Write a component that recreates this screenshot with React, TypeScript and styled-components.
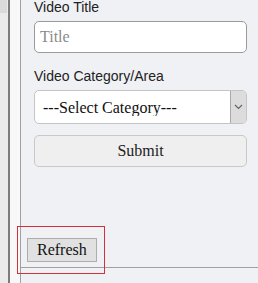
import React from "react";
import styled, { createGlobalStyle } from "styled-components";

const GlobalStyle = createGlobalStyle`
  html, body {
    margin: 0;
    padding: 0;
    background: #f0f1f5;
  }
`;

const categories = ["---Select Category---", "Education", "Music", "Sports"];

const App = () => {
  return (
    <>
      <GlobalStyle />
      <Page>
        <Gutter>
          <Thumb />
        </Gutter>
        <Rule />
        <Strip />
        <Panel>
          <Form>
            <Label>Video Title</Label>
            <TextInput type="text" placeholder="Title" />
            <Label $gap={15}>Video Category/Area</Label>
            <SelectWrap>
              <Select defaultValue={categories[0]}>
                {categories.map((c) => (
                  <option key={c}>{c}</option>
                ))}
              </Select>
              <ArrowBox>
                <svg width="9" height="6" viewBox="0 0 9 6">
                  <path d="M1 1 L4.5 4.5 L8 1" fill="none" stroke="#666" strokeWidth="1.2" />
                </svg>
              </ArrowBox>
            </SelectWrap>
            <SubmitButton type="button">Submit</SubmitButton>
          </Form>
          <Footer>
            <RefreshButton type="button">Refresh</RefreshButton>
          </Footer>
        </Panel>
        <Highlight />
      </Page>
    </>
  );
};

const Page = styled.div`
  position: relative;
  display: flex;
  height: 283px;
  overflow: hidden;
`;

const Gutter = styled.div`
  width: 8px;
  background: #ebebeb;
`;

const Thumb = styled.div`
  width: 7px;
  height: 13px;
  background: #dadada;
`;

const Rule = styled.div`
  width: 2px;
  background: #7c7c7c;
`;

const Strip = styled.div`
  width: 10px;
  background: #f8f8f8;
`;

const Panel = styled.div`
  flex: 1;
  display: flex;
  flex-direction: column;
  border-left: 1px solid #a0a0a0;
  background: #f0f1f5;
`;

const Form = styled.div`
  display: flex;
  flex-direction: column;
  width: 213px;
  margin: -1px 0 0 13px;
`;

const Label = styled.div<{ $gap?: number }>`
  margin-top: ${(p) => p.$gap || 0}px;
  margin-bottom: 6px;
  font-family: "Liberation Sans", Arial, sans-serif;
  font-size: 14px;
  line-height: 16px;
  color: #222;
`;

const TextInput = styled.input`
  box-sizing: border-box;
  height: 32px;
  padding: 0 5px;
  border: 1px solid #9a9a9a;
  border-radius: 5px;
  background: #fff;
  font-family: "Liberation Serif", "Times New Roman", serif;
  font-size: 16px;
  outline: none;
  &::placeholder {
    color: #8a8a8a;
  }
`;

const SelectWrap = styled.div`
  display: flex;
  height: 34px;
  box-sizing: border-box;
  border: 1px solid #c4c4c4;
  border-radius: 5px;
  background: #fff;
  overflow: hidden;
`;

const Select = styled.select`
  flex: 1;
  appearance: none;
  border: none;
  background: transparent;
  padding: 0 0 0 8px;
  font-family: "Liberation Serif", "Times New Roman", serif;
  font-size: 16px;
  color: #111;
  outline: none;
`;

const ArrowBox = styled.div`
  width: 15px;
  display: flex;
  align-items: center;
  justify-content: center;
  background: #dcdcdc;
  border-left: 1px solid #a8a8a8;
`;

const SubmitButton = styled.button`
  margin-top: 11px;
  height: 32px;
  border: 1px solid #c8c8c8;
  border-radius: 5px;
  background: #efefef;
  font-family: "Liberation Serif", "Times New Roman", serif;
  font-size: 16px;
  color: #222;
`;

const Footer = styled.div`
  margin-top: auto;
  margin-bottom: 15px;
  padding: 0 0 5px 6px;
  border-bottom: 1px solid #a0a0a0;
`;

const RefreshButton = styled.button`
  display: block;
  height: 24px;
  padding: 0 9px;
  border: 1px solid #adadad;
  border-radius: 0;
  background: #e1e1e1;
  font-family: "Liberation Serif", "Times New Roman", serif;
  font-size: 16px;
  line-height: 18px;
  color: #111;
`;

const Highlight = styled.div`
  position: absolute;
  left: 17px;
  top: 226px;
  width: 86px;
  height: 46px;
  border: 1px solid #d0313a;
  pointer-events: none;
`;

export default App;
